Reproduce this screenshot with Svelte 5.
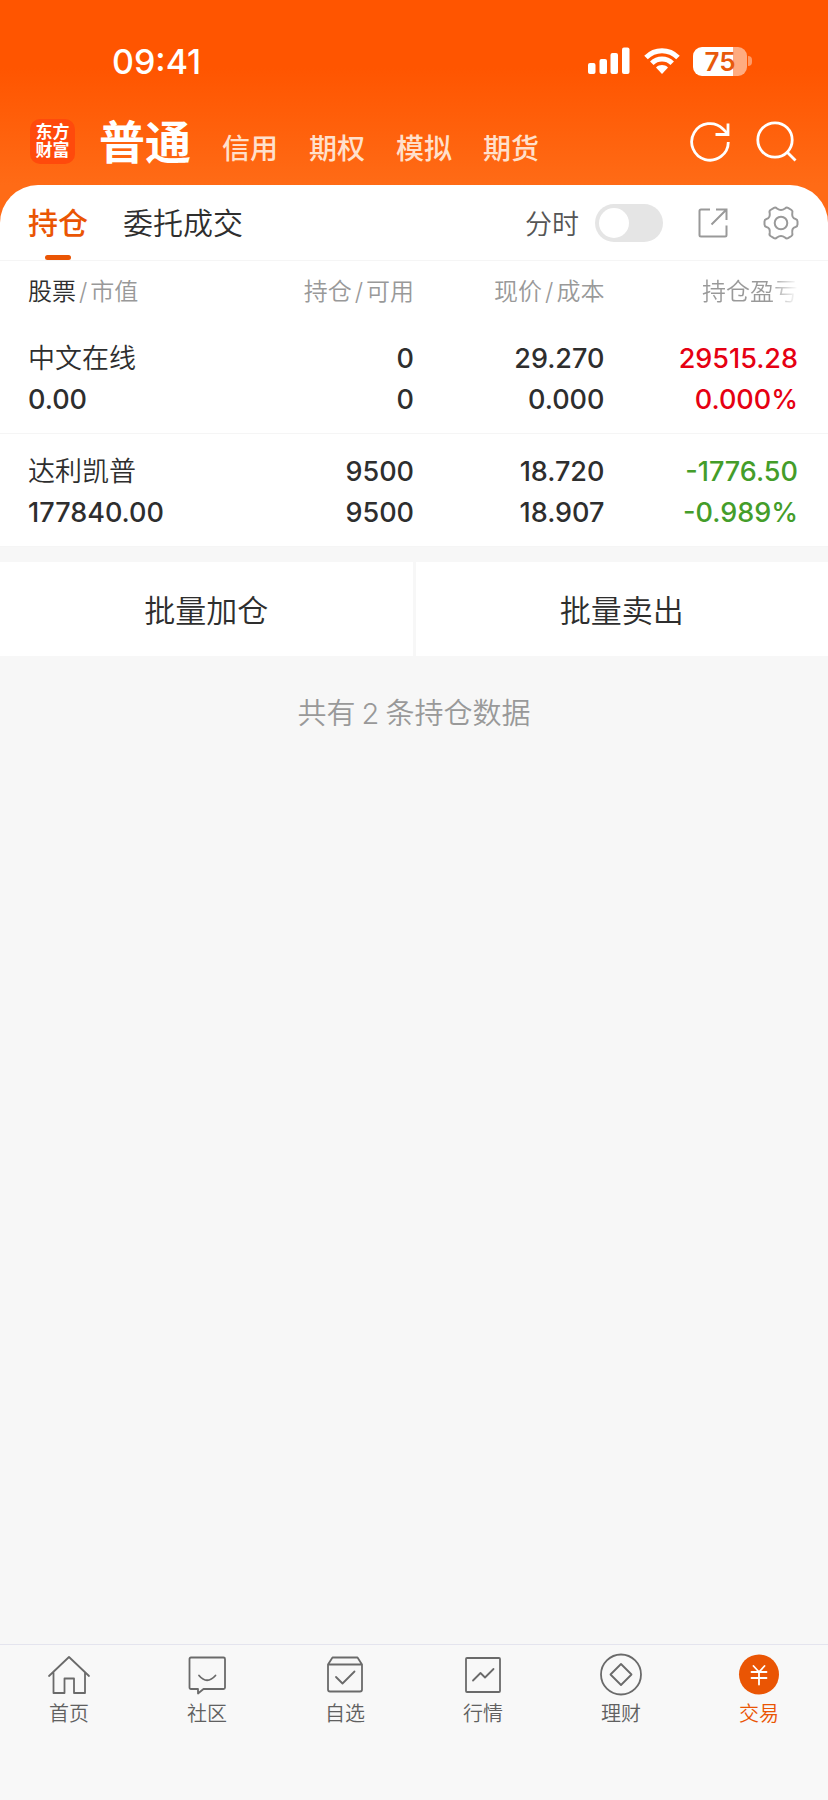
<script>
  let intraday = $state(false);
  let account = $state('普通');
  let view = $state('持仓');

  const otherAccounts = ['信用', '期权', '模拟', '期货'];
  const views = ['持仓', '委托成交'];

  const holdings = [
    { name: '中文在线', value: '0.00', held: '0', usable: '0', price: '29.270', cost: '0.000', profit: '29515.28', rate: '0.000%', trend: 'up' },
    { name: '达利凯普', value: '177840.00', held: '9500', usable: '9500', price: '18.720', cost: '18.907', profit: '-1776.50', rate: '-0.989%', trend: 'down' }
  ];

  const navItems = [
    { id: 'home', label: '首页' },
    { id: 'community', label: '社区' },
    { id: 'watchlist', label: '自选' },
    { id: 'market', label: '行情' },
    { id: 'wealth', label: '理财' },
    { id: 'trade', label: '交易' }
  ];
  const current = 'trade';
</script>

<div class="page">
  <header class="top">
    <div class="status">
      <time>09:41</time>
      <div class="indicators">
        <svg width="43" height="28" viewBox="0 0 43 28" fill="#fff" aria-hidden="true">
          <rect x="0" y="16" width="7.500" height="11" rx="2" />
          <rect x="11.500" y="12" width="7.500" height="15" rx="2" />
          <rect x="22.500" y="6" width="7.500" height="21" rx="2" />
          <rect x="34" y="0.500" width="7.500" height="26.500" rx="2" />
        </svg>
        <svg width="36" height="28" viewBox="0 0 36 28" aria-hidden="true">
          <g fill="none" stroke="#fff" stroke-width="5">
            <path d="M2 10.500C11 1.500 25 1.500 34 10.500" />
            <path d="M7.800 16.300C13.500 10.700 22.500 10.700 28.200 16.300" />
          </g>
          <path d="M12 20.500C15.500 17.300 20.500 17.300 24 20.500L18 27Z" fill="#fff" />
        </svg>
        <div class="battery"><span class="level">75</span><i></i></div>
      </div>
    </div>
    <div class="accounts">
      <div class="logo">东方<br />财富</div>
      <nav class="account-tabs">
        <button class="main-account" onclick={() => (account = '普通')}>普通</button>
        {#each otherAccounts as item}
          <button class="account" onclick={() => (account = item)}>{item}</button>
        {/each}
      </nav>
      <div class="actions">
        <button aria-label="刷新">
          <svg width="42" height="42" viewBox="0 0 42 42" fill="none" stroke="#fff" stroke-width="2.800">
            <path d="M38.300 21A18.300 18.300 0 1 1 33 8L38 13" />
            <path d="M38 2.500V13.500H25.500" />
          </svg>
        </button>
        <button aria-label="搜索">
          <svg width="42" height="42" viewBox="0 0 42 42" fill="none" stroke="#fff" stroke-width="2.800">
            <circle cx="19" cy="19" r="17.200" />
            <path d="M30.500 30.500L39.500 39.500" />
          </svg>
        </button>
      </div>
    </div>
  </header>

  <main>
    <div class="toolbar">
      {#each views as item}
        <button class="view" class:active={view === item} onclick={() => (view = item)}>{item}</button>
      {/each}
      <label class="intraday" for="intraday">分时</label>
      <input id="intraday" type="checkbox" class="switch" bind:checked={intraday} />
      <button class="tool share" aria-label="分享">
        <svg width="30" height="30" viewBox="0 0 30 30" fill="none" stroke="#999" stroke-width="2">
          <path d="M12 1.500H3Q1.500 1.500 1.500 3V27Q1.500 28.500 3 28.500H27Q28.500 28.500 28.500 27V17.500" />
          <path d="M18 1.500H28.500V12M28.500 1.500L13.500 16.500" />
        </svg>
      </button>
      <button class="tool" aria-label="设置">
        <svg width="36" height="36" viewBox="0 0 36 36" fill="none" stroke="#999" stroke-width="2" stroke-linejoin="round">
          <path d="M11 2.800Q12.500 2 14 3.500Q18 6.500 22 3.500Q23.500 2 25 2.800L28.500 5Q30 6 29.300 8Q28.500 13 32.500 14Q34.500 14.700 34.500 16.500V19.500Q34.500 21.300 32.500 22Q28.500 23 29.300 28Q30 30 28.500 31L25 33.200Q23.500 34 22 32.500Q18 29.500 14 32.500Q12.500 34 11 33.200L7.500 31Q6 30 6.700 28Q7.500 23 3.500 22Q1.500 21.300 1.500 19.500V16.500Q1.500 14.700 3.500 14Q7.500 13 6.700 8Q6 6 7.500 5Z" />
          <circle cx="18" cy="18" r="6.300" />
        </svg>
      </button>
    </div>

    <table>
      <colgroup>
        <col class="c-name" />
        <col class="c-held" />
        <col class="c-price" />
        <col class="c-profit" />
      </colgroup>
      <thead>
        <tr>
          <th><b>股票</b><s>/</s>市值</th>
          <th>持仓<s>/</s>可用</th>
          <th>现价<s>/</s>成本</th>
          <th><span class="fade">持仓盈亏</span></th>
        </tr>
      </thead>
      <tbody>
        {#each holdings as row}
          <tr>
            <td><span class="name">{row.name}</span><span>{row.value}</span></td>
            <td><span>{row.held}</span><span>{row.usable}</span></td>
            <td><span>{row.price}</span><span>{row.cost}</span></td>
            <td class={row.trend}><span>{row.profit}</span><span>{row.rate}</span></td>
          </tr>
        {/each}
      </tbody>
    </table>

    <div class="batch">
      <button>批量加仓</button>
      <button>批量卖出</button>
    </div>
    <p class="summary">共有<span>{holdings.length}</span>条持仓数据</p>
  </main>

  <nav class="bottom">
    {#each navItems as item}
      <a href={'#' + item.id} class:current={item.id === current}>
        <svg width="44" height="44" viewBox="0 0 44 44" fill="none" stroke="#6a6a6a" stroke-width="1.800" stroke-linejoin="round" stroke-linecap="round" aria-hidden="true">
          {#if item.id === 'home'}
            <path d="M2 23L22 4L42 23M6.500 19.500V40H17.500V25.500H27V40H38V19.500" />
          {:else if item.id === 'community'}
            <path d="M6 4.500H38.500Q40 4.500 40 6V34.500Q40 36 38.500 36H18.500L13 40.500V36H6Q4.500 36 4.500 34.500V6Q4.500 4.500 6 4.500Z" />
            <path d="M14 22.500Q22 32 30.500 22.500" />
          {:else if item.id === 'watchlist'}
            <path d="M5 11.500L9.500 4.500H34.500L39 11.500V36.500Q39 38.500 37 38.500H7Q5 38.500 5 36.500V11.500ZM5 11.500H39" />
            <path d="M13 24L19.500 30.500L31.500 18.500" />
          {:else if item.id === 'market'}
            <rect x="5" y="5" width="34" height="34" rx="1" />
            <path d="M12 27.500L19.500 20L24 24.500L32.500 16" />
          {:else if item.id === 'wealth'}
            <circle cx="22" cy="21.500" r="20" />
            <path d="M22 11L32.500 21.500L22 32L11.500 21.500Z" />
          {:else}
            <circle cx="22" cy="21.500" r="20" fill="#ea5504" stroke="none" />
            <path d="M16.500 13L22 19L27.500 13M22 19V31.500M14.500 19H29.500M14.500 25H29.500" stroke="#fff" />
          {/if}
        </svg>
        <span>{item.label}</span>
      </a>
    {/each}
  </nav>
</div>

<style>
  :global(body) {
    margin: 0;
    background: #f7f7f7;
  }
  .page {
    display: flex;
    flex-direction: column;
    min-height: 100vh;
    font-family: Inter, "Noto Sans CJK SC", sans-serif;
    font-weight: 350;
    color: #2e2e2e;
    background: #f7f7f7;
  }
  button {
    padding: 0;
    border: 0;
    background: none;
    font: inherit;
    color: inherit;
    cursor: pointer;
  }
  svg {
    display: block;
  }
  .top {
    padding-bottom: 60px;
    background: linear-gradient(#ff5500 0, #ff5500 68px, #ff6b16 185px);
    color: #fff;
  }
  .status {
    display: flex;
    align-items: center;
    justify-content: space-between;
    height: 100px;
    padding: 22px 76px 0 112px;
    box-sizing: border-box;
  }
  time {
    font-size: 34px;
    font-weight: 500;
  }
  .indicators {
    display: flex;
    align-items: center;
    gap: 13px;
  }
  .battery {
    display: flex;
    align-items: center;
    gap: 1px;
  }
  .level {
    width: 54px;
    height: 29px;
    border-radius: 9px;
    background: linear-gradient(90deg, #fff 74%, #ffab80 74%);
    color: #e8590c;
    font-size: 26px;
    font-weight: 600;
    line-height: 29px;
    text-align: center;
  }
  .battery i {
    width: 4px;
    height: 10px;
    border-radius: 0 4px 4px 0;
    background: #ff9a66;
  }
  .accounts {
    display: flex;
    align-items: center;
    height: 83px;
    padding: 0 30px;
  }
  .logo {
    width: 45px;
    height: 45px;
    padding-top: 4px;
    box-sizing: border-box;
    border-radius: 10px;
    background: #ff4a0c;
    font-size: 17px;
    font-weight: 700;
    line-height: 18px;
    text-align: center;
  }
  .account-tabs {
    display: flex;
    align-items: baseline;
    gap: 31px;
    margin-left: 24px;
  }
  .main-account {
    font-size: 46px;
    font-weight: 700;
    line-height: 60px;
  }
  .account {
    font-size: 28px;
    font-weight: 500;
    color: #ffe0cc;
  }
  .actions {
    display: flex;
    gap: 24px;
    margin-left: auto;
  }
  main {
    margin-top: -58px;
  }
  .toolbar {
    display: flex;
    align-items: stretch;
    height: 75px;
    padding: 0 29px 0 28px;
    border-bottom: 1px solid #f5f5f5;
    border-radius: 38px 38px 0 0;
    background: #fff;
  }
  .view {
    position: relative;
    margin-right: 35px;
    font-size: 30px;
    line-height: 72px;
  }
  .view.active {
    color: #ea5504;
    font-weight: 500;
  }
  .view.active::after {
    content: "";
    position: absolute;
    left: 50%;
    bottom: 0;
    width: 26px;
    height: 5px;
    margin-left: -13px;
    border-radius: 3px;
    background: #ea5504;
  }
  .intraday {
    align-self: center;
    margin-left: auto;
    font-size: 27px;
    color: #555;
  }
  .switch {
    appearance: none;
    align-self: center;
    display: flex;
    width: 68px;
    height: 38px;
    margin: 0 35px 0 16px;
    padding: 4px;
    box-sizing: border-box;
    border-radius: 19px;
    background: #e5e5e5;
  }
  .switch::before {
    content: "";
    width: 30px;
    height: 30px;
    border-radius: 50%;
    background: #fff;
  }
  .switch:checked {
    justify-content: flex-end;
    background: #ea5504;
  }
  .share {
    margin-right: 35px;
  }
  table {
    width: 100%;
    table-layout: fixed;
    border-collapse: collapse;
    background: #fff;
    text-align: right;
  }
  .c-name,
  .c-held {
    width: 25%;
  }
  .c-price {
    width: 23%;
  }
  .c-profit {
    width: 27%;
  }
  th {
    height: 59px;
    padding: 3px 0 0;
    box-sizing: border-box;
    font-size: 24px;
    font-weight: 350;
    line-height: 56px;
    color: #999;
  }
  th b {
    font-weight: 350;
    color: #2e2e2e;
  }
  s {
    margin: 0 3px;
    text-decoration: none;
  }
  .fade {
    background: linear-gradient(90deg, #999 70%, #fff);
    background-clip: text;
    color: transparent;
  }
  td {
    height: 113px;
    padding: 5px 0 0;
    box-sizing: border-box;
    border-bottom: 1px solid #f5f5f5;
    font-size: 27px;
    font-weight: 500;
  }
  td span {
    display: block;
    line-height: 41px;
  }
  td .name {
    font-weight: 350;
  }
  th:first-child,
  td:first-child {
    padding-left: 28px;
    text-align: left;
  }
  th:last-child,
  td:last-child {
    padding-right: 30px;
  }
  .up {
    color: #e60012;
  }
  .down {
    color: #449d2a;
  }
  .batch {
    display: grid;
    grid-template-columns: 1fr 1fr;
    gap: 3px;
    margin-top: 15px;
  }
  .batch button {
    height: 94px;
    background: #fff;
    font-size: 31px;
  }
  .summary {
    margin: 36px 0;
    font-size: 29px;
    line-height: 44px;
    text-align: center;
    color: #999;
  }
  .summary span {
    margin: 0 6px;
  }
  .bottom {
    display: grid;
    grid-template-columns: repeat(6, 1fr);
    height: 155px;
    margin-top: auto;
    border-top: 1px solid #e4e4ee;
    background: #f8f8f8;
  }
  .bottom a {
    display: flex;
    flex-direction: column;
    align-items: center;
    gap: 1px;
    padding-top: 8px;
    font-size: 20px;
    line-height: 32px;
    color: #606060;
    text-decoration: none;
  }
  .bottom .current {
    color: #ea5504;
  }
</style>
